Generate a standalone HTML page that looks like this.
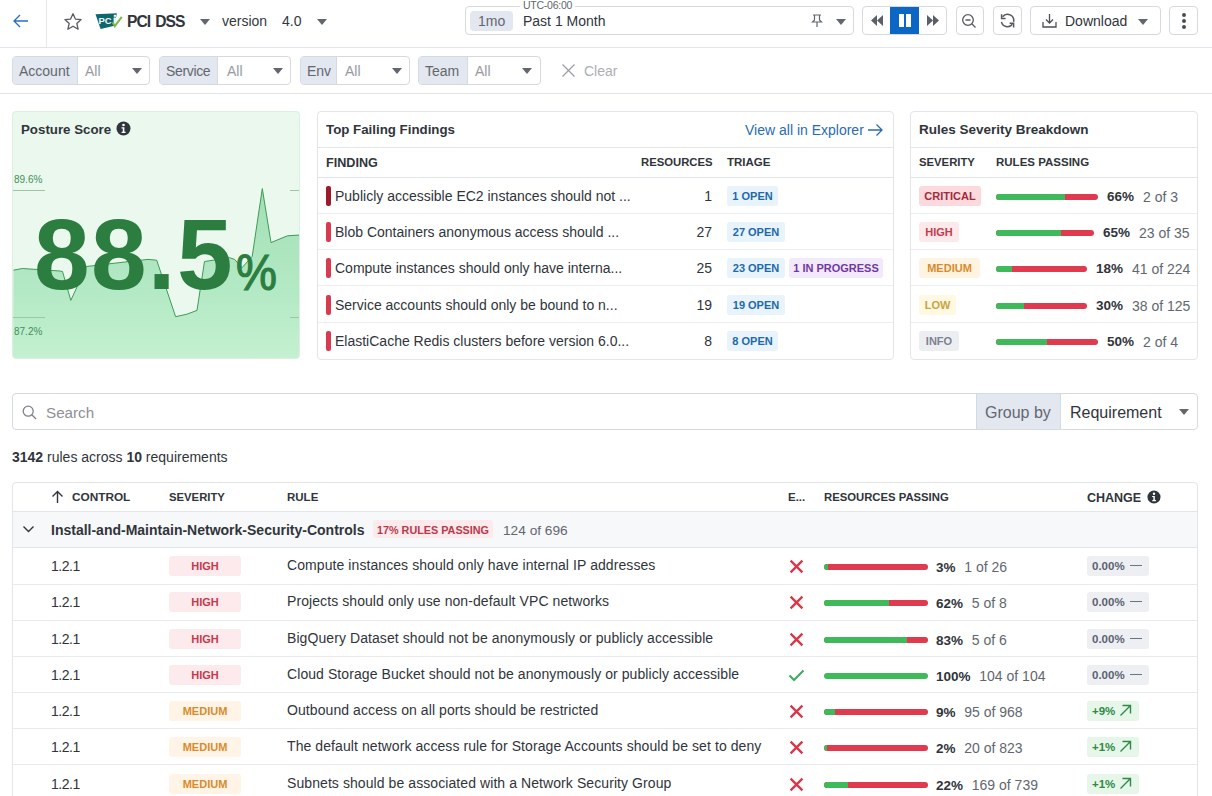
<!DOCTYPE html>
<html><head><meta charset="utf-8">
<style>
*{box-sizing:border-box;margin:0;padding:0}
html,body{width:1212px;height:796px;overflow:hidden;background:#fff}
body{font-family:"Liberation Sans",sans-serif;color:#30353b;font-size:14px;position:relative}
.abs{position:absolute}
.t{position:absolute;white-space:nowrap;line-height:1}
.hline{position:absolute;height:1px;background:#e2e5ea}
.btn{position:absolute;border:1px solid #d5d9e0;border-radius:4px;background:#fff}
.caret{position:absolute;width:0;height:0;border-left:5px solid transparent;border-right:5px solid transparent;border-top:6px solid #62676f;margin-top:1px}
.chip{position:absolute;top:56px;height:29px;border:1px solid #d5d9e0;border-radius:4px;background:#fff;overflow:hidden}
.chip .lab{position:absolute;left:0;top:0;bottom:0;background:#e3e7ef;border-right:1px solid #d5d9e0}
.card{position:absolute;top:111px;height:248px;border:1px solid #e2e5ea;border-radius:4px;background:#fff;overflow:hidden}
</style></head><body>

<!-- TOP BAR -->
<svg class="abs" style="left:12px;top:13px" width="18" height="16" viewBox="0 0 18 16"><path d="M2 8H16M8 2L2 8L8 14" fill="none" stroke="#2a6dbd" stroke-width="1.3"/></svg>
<div class="abs" style="left:46px;top:0;width:1px;height:47px;background:#e6e8ec"></div>
<svg class="abs" style="left:62.5px;top:11.5px" width="20" height="20" viewBox="0 0 20 20"><path d="M10 1.8L12.4 7.1L18.1 7.6L13.8 11.4L15.1 17.2L10 14.2L4.9 17.2L6.2 11.4L1.9 7.6L7.6 7.1Z" fill="none" stroke="#55595f" stroke-width="1.3" stroke-linejoin="round"/></svg>
<svg class="abs" style="left:90px;top:8px" width="36" height="26" viewBox="90 8 36 26"><path d="M95.5 14.2L116.8 13.2L114.5 25.8L100.6 29Z" fill="#0f666c"/><text x="98.6" y="24.4" font-family="Liberation Sans" font-weight="700" font-size="9.5" fill="#eefcfc" letter-spacing="-0.3">PC</text><rect x="113.6" y="17.5" width="2.3" height="7" fill="#eefcfc"/><rect x="113.8" y="14.8" width="2.2" height="2" fill="#eefcfc"/><path d="M112.6 22.3L114.8 26.2L121.8 16.8" fill="none" stroke="#7bb84a" stroke-width="2"/></svg>
<div class="t" style="left:127px;top:14px;font-size:15.6px;font-weight:700;color:#30353b;letter-spacing:-1px;word-spacing:2px">PCI DSS</div>
<div class="caret" style="left:200px;top:18px"></div>
<div class="t" style="left:222px;top:14px;font-size:14px;color:#33373e">version</div>
<div class="t" style="left:282px;top:14px;font-size:14px;color:#33373e">4.0</div>
<div class="caret" style="left:317px;top:18px"></div>

<!-- time picker -->
<div class="btn" style="left:465px;top:6px;width:389px;height:29px"></div>
<div class="abs" style="left:520px;top:2px;width:55px;height:8px;background:#fff"></div>
<div class="t" style="left:523px;top:0px;font-size:10.5px;color:#62676f;letter-spacing:-0.25px">UTC-06:00</div>
<div class="abs" style="left:470px;top:11px;width:43px;height:20px;background:#e3e7ef;border-radius:4px"></div>
<div class="t" style="left:478px;top:14px;font-size:14px;color:#62676f">1mo</div>
<div class="t" style="left:523px;top:14px;font-size:14px;color:#30353b">Past 1 Month</div>
<svg class="abs" style="left:810px;top:13px" width="14" height="16" viewBox="0 0 14 16"><path d="M3 2H11M4.5 2V7L2.5 9H11.5L9.5 7V2M7 9V14" fill="none" stroke="#62676f" stroke-width="1.2"/></svg>
<div class="caret" style="left:836px;top:18px"></div>

<!-- playback -->
<div class="btn" style="left:862px;top:6px;width:85px;height:29px;overflow:hidden">
  <div class="abs" style="left:27px;top:0;width:29px;height:29px;background:#0c66c4"></div>
</div>
<svg class="abs" style="left:870px;top:14px" width="14" height="13" viewBox="0 0 14 13"><path d="M7 1L1 6.5L7 12ZM13 1L7 6.5L13 12Z" fill="#5b6068"/></svg>
<div class="abs" style="left:899px;top:14px;width:5px;height:13px;background:#fff"></div>
<div class="abs" style="left:906px;top:14px;width:5px;height:13px;background:#fff"></div>
<svg class="abs" style="left:926px;top:14px" width="14" height="13" viewBox="0 0 14 13"><path d="M1 1L7 6.5L1 12ZM7 1L13 6.5L7 12Z" fill="#5b6068"/></svg>

<div class="btn" style="left:956px;top:6px;width:28px;height:29px"></div>
<svg class="abs" style="left:961px;top:13px" width="16" height="16" viewBox="0 0 16 16"><circle cx="7" cy="7" r="5.3" fill="none" stroke="#55595f" stroke-width="1.3"/><path d="M4.5 7H9.5M11 11L14.5 14.5" stroke="#55595f" stroke-width="1.3"/></svg>
<div class="btn" style="left:993px;top:6px;width:29px;height:29px"></div>
<svg class="abs" style="left:999.5px;top:13px" width="16" height="16" viewBox="0 0 16 16"><path d="M2.61 3.68A6.2 6.2 0 0 1 13.56 8.79M1.44 8.79A6.2 6.2 0 0 0 12.39 11.32" fill="none" stroke="#55595f" stroke-width="1.5"/><path d="M1.6 1.2V5.4H5.6M13.6 14.4V10.2H9.6" fill="none" stroke="#55595f" stroke-width="1.5"/></svg>
<div class="btn" style="left:1030px;top:6px;width:131px;height:29px"></div>
<svg class="abs" style="left:1042px;top:13px" width="15" height="15" viewBox="0 0 15 15"><path d="M7.5 1V10M4 6.5L7.5 10L11 6.5M1 9V14H14V9" fill="none" stroke="#4a4f57" stroke-width="1.3"/></svg>
<div class="t" style="left:1065px;top:14px;font-size:14px;color:#30353b">Download</div>
<div class="caret" style="left:1138px;top:18px"></div>
<div class="btn" style="left:1169px;top:6px;width:29px;height:29px"></div>
<div class="abs" style="left:1182px;top:13px;width:4px;height:4px;border-radius:2px;background:#4a4f57"></div>
<div class="abs" style="left:1182px;top:19px;width:4px;height:4px;border-radius:2px;background:#4a4f57"></div>
<div class="abs" style="left:1182px;top:25px;width:4px;height:4px;border-radius:2px;background:#4a4f57"></div>

<div class="hline" style="left:0;top:47px;width:1212px"></div>

<!-- FILTER BAR -->
<div class="chip" style="left:12px;width:138px"><div class="lab" style="width:65px"></div></div>
<div class="t" style="left:19px;top:64px;color:#62676e">Account</div>
<div class="t" style="left:85px;top:64px;color:#969aa0">All</div>
<div class="caret" style="left:132px;top:67px"></div>

<div class="chip" style="left:159px;width:132px"><div class="lab" style="width:58px"></div></div>
<div class="t" style="left:166px;top:64px;color:#62676e;letter-spacing:-0.35px">Service</div>
<div class="t" style="left:227px;top:64px;color:#969aa0">All</div>
<div class="caret" style="left:273px;top:67px"></div>

<div class="chip" style="left:300px;width:110px"><div class="lab" style="width:36px"></div></div>
<div class="t" style="left:307px;top:64px;color:#62676e">Env</div>
<div class="t" style="left:345px;top:64px;color:#969aa0">All</div>
<div class="caret" style="left:392px;top:67px"></div>

<div class="chip" style="left:418px;width:123px"><div class="lab" style="width:49px"></div></div>
<div class="t" style="left:425px;top:64px;color:#62676e">Team</div>
<div class="t" style="left:475px;top:64px;color:#969aa0">All</div>
<div class="caret" style="left:522px;top:67px"></div>

<svg class="abs" style="left:561px;top:63px" width="15" height="15" viewBox="0 0 15 15"><path d="M1.5 1.5L13.5 13.5M13.5 1.5L1.5 13.5" stroke="#9a9ea5" stroke-width="1.3"/></svg>
<div class="t" style="left:584px;top:64px;color:#acafb4">Clear</div>

<div class="hline" style="left:0;top:93px;width:1212px"></div>

<!-- POSTURE CARD -->
<div class="card" style="left:12px;width:288px;background:#eaf8ee;border-color:#dcefe1">
<svg class="abs" style="left:0;top:0" width="288" height="248" viewBox="12 111 288 248">
<defs><linearGradient id="g1" gradientUnits="userSpaceOnUse" x1="0" y1="187" x2="0" y2="359"><stop offset="0" stop-color="#a2dfb5"/><stop offset="0.6" stop-color="#b4e9c5"/><stop offset="1" stop-color="#c4f1d1"/></linearGradient></defs>
<path d="M12.5 269.2L21.3 267.5L59 270L61.5 270.5L69.8 299.4L85.4 265.5L118 261.7L147 258.4L155.7 259.2L174.6 315.7L185.9 313.2L196 309.4L203.5 260.5L228.6 256.7L233.6 258.4L241 266.7L251.2 255.4L261.3 187.6L270 241.6L286.4 234.8L299.5 234L299.5 359L12 359Z" fill="url(#g1)"/>
<path d="M12.5 269.2L21.3 267.5L59 270L61.5 270.5L69.8 299.4L85.4 265.5L118 261.7L147 258.4L155.7 259.2L174.6 315.7L185.9 313.2L196 309.4L203.5 260.5L228.6 256.7L233.6 258.4L241 266.7L251.2 255.4L261.3 187.6L270 241.6L286.4 234.8L299.5 234" fill="none" stroke="#3e9a57" stroke-width="1"/>
<path d="M12 189.5H44M289 189.5H300M12 316.5H44M289 316.5H300" stroke="#9cc7a7" stroke-width="1"/>
</svg>
</div>
<div class="t" style="left:21px;top:123px;font-size:13.3px;font-weight:700;color:#30353b">Posture Score</div>
<svg class="abs" style="left:116px;top:121px" width="15" height="15" viewBox="0 0 15 15"><circle cx="7.5" cy="7.5" r="7" fill="#30353b"/><circle cx="7.5" cy="4" r="1.3" fill="#fff"/><path d="M5.5 6.3H8.4V10.8H9.6V12H5.6V10.8H6.8V7.5H5.5Z" fill="#fff"/></svg>
<div class="t" style="left:14px;top:175px;font-size:10px;color:#458f5a">89.6%</div>
<div class="t" style="left:14px;top:327px;font-size:10px;color:#458f5a">87.2%</div>
<div class="t" style="left:34px;top:204px;font-size:100px;font-weight:700;color:#2b7e40;letter-spacing:1.3px">88.5</div>
<div class="t" style="left:236px;top:248px;font-size:50px;font-weight:400;color:#2b7e40;transform:scaleX(0.92);transform-origin:0 0;-webkit-text-stroke:1.2px #2b7e40">%</div>
<!-- TOP FAILING -->
<div class="card" style="left:317px;width:577px;height:249px"></div>
<div class="t" style="left:326px;top:123px;font-size:13.3px;font-weight:700;color:#30353b">Top Failing Findings</div>
<div class="t" style="left:745px;top:123px;font-size:14px;color:#2a6bb3">View all in Explorer</div>
<svg class="abs" style="left:867px;top:123px" width="17" height="14" viewBox="0 0 17 14"><path d="M1 7H15M9.5 1.5L15 7L9.5 12.5" fill="none" stroke="#2a6bb3" stroke-width="1.3"/></svg>
<div class="hline" style="left:318px;top:147px;width:575px"></div>
<div class="t" style="left:326px;top:157px;font-size:12.6px;font-weight:700;color:#30353b">FINDING</div>
<div class="t" style="left:641px;top:157px;font-size:11.3px;font-weight:700;color:#30353b">RESOURCES</div>
<div class="t" style="left:727px;top:157px;font-size:11.5px;font-weight:700;color:#30353b">TRIAGE</div>
<div class="hline" style="left:318px;top:177px;width:575px"></div>
<div class="abs" style="left:326px;width:5px;top:186px;height:20px;border-radius:2px;background:#9c1b2b"></div>
<div class="t" style="left:335px;top:189px;font-size:14px;color:#30353b">Publicly accessible EC2 instances should not ...</div>
<div class="t" style="left:613px;width:99px;text-align:right;top:189px;font-size:14px;color:#30353b">1</div>
<div class="abs" style="left:727px;top:186px;width:51px;height:20px;border-radius:3px;background:#e8f3fb;color:#1d6aab;font-size:11px;font-weight:700;line-height:21px;text-align:center;white-space:nowrap">1 OPEN</div>
<div class="hline" style="left:318px;top:213px;width:575px;background:#eceef1"></div>
<div class="abs" style="left:326px;width:5px;top:222px;height:20px;border-radius:2px;background:#d83a50"></div>
<div class="t" style="left:335px;top:225px;font-size:14px;color:#30353b">Blob Containers anonymous access should ...</div>
<div class="t" style="left:613px;width:99px;text-align:right;top:225px;font-size:14px;color:#30353b">27</div>
<div class="abs" style="left:727px;top:222px;width:58px;height:20px;border-radius:3px;background:#e8f3fb;color:#1d6aab;font-size:11px;font-weight:700;line-height:21px;text-align:center;white-space:nowrap">27 OPEN</div>
<div class="hline" style="left:318px;top:249px;width:575px;background:#eceef1"></div>
<div class="abs" style="left:326px;width:5px;top:258px;height:20px;border-radius:2px;background:#d83a50"></div>
<div class="t" style="left:335px;top:261px;font-size:14px;color:#30353b">Compute instances should only have interna...</div>
<div class="t" style="left:613px;width:99px;text-align:right;top:261px;font-size:14px;color:#30353b">25</div>
<div class="abs" style="left:727px;top:258px;width:58px;height:20px;border-radius:3px;background:#e8f3fb;color:#1d6aab;font-size:11px;font-weight:700;line-height:21px;text-align:center;white-space:nowrap">23 OPEN</div>
<div class="abs" style="left:789px;top:258px;width:94px;height:20px;border-radius:3px;background:#f2eafb;color:#71399f;font-size:11px;font-weight:700;line-height:21px;text-align:center;white-space:nowrap">1 IN PROGRESS</div>
<div class="hline" style="left:318px;top:285px;width:575px;background:#eceef1"></div>
<div class="abs" style="left:326px;width:5px;top:295px;height:20px;border-radius:2px;background:#d83a50"></div>
<div class="t" style="left:335px;top:298px;font-size:14px;color:#30353b">Service accounts should only be bound to n...</div>
<div class="t" style="left:613px;width:99px;text-align:right;top:298px;font-size:14px;color:#30353b">19</div>
<div class="abs" style="left:727px;top:295px;width:58px;height:20px;border-radius:3px;background:#e8f3fb;color:#1d6aab;font-size:11px;font-weight:700;line-height:21px;text-align:center;white-space:nowrap">19 OPEN</div>
<div class="hline" style="left:318px;top:322px;width:575px;background:#eceef1"></div>
<div class="abs" style="left:326px;width:5px;top:331px;height:20px;border-radius:2px;background:#d83a50"></div>
<div class="t" style="left:335px;top:334px;font-size:14px;color:#30353b">ElastiCache Redis clusters before version 6.0...</div>
<div class="t" style="left:613px;width:99px;text-align:right;top:334px;font-size:14px;color:#30353b">8</div>
<div class="abs" style="left:727px;top:331px;width:51px;height:20px;border-radius:3px;background:#e8f3fb;color:#1d6aab;font-size:11px;font-weight:700;line-height:21px;text-align:center;white-space:nowrap">8 OPEN</div>
<!-- SEVERITY BREAKDOWN -->
<div class="card" style="left:910px;width:288px;height:249px"></div>
<div class="t" style="left:919px;top:123px;font-size:13.5px;font-weight:700;color:#30353b">Rules Severity Breakdown</div>
<div class="hline" style="left:911px;top:147px;width:286px"></div>
<div class="t" style="left:919px;top:157px;font-size:11.3px;font-weight:700;color:#30353b">SEVERITY</div>
<div class="t" style="left:996px;top:157px;font-size:11.5px;font-weight:700;color:#30353b">RULES PASSING</div>
<div class="hline" style="left:911px;top:177px;width:286px"></div>
<div class="abs" style="left:919px;top:186px;width:62px;height:20px;border-radius:3px;background:#fbd9dd;color:#a32a3b;font-size:11px;font-weight:700;line-height:20px;text-align:center">CRITICAL</div>
<div class="abs" style="left:996px;top:194px;width:102px;height:6px;border-radius:3px;background:#e03a4e;overflow:hidden"><div style="width:69px;height:6px;background:#3fba5b"></div></div>
<div class="t" style="left:1107px;top:190px;font-size:13.5px;font-weight:700;color:#30353b">66%</div>
<div class="t" style="left:1143px;top:190px;font-size:14px;color:#62676f">2 of 3</div>
<div class="hline" style="left:911px;top:213px;width:286px;background:#eceef1"></div>
<div class="abs" style="left:919px;top:222px;width:40px;height:20px;border-radius:3px;background:#fde8ea;color:#c73a4e;font-size:11px;font-weight:700;line-height:20px;text-align:center">HIGH</div>
<div class="abs" style="left:996px;top:230px;width:98px;height:6px;border-radius:3px;background:#e03a4e;overflow:hidden"><div style="width:65px;height:6px;background:#3fba5b"></div></div>
<div class="t" style="left:1103px;top:226px;font-size:13.5px;font-weight:700;color:#30353b">65%</div>
<div class="t" style="left:1139px;top:226px;font-size:14px;color:#62676f">23 of 35</div>
<div class="hline" style="left:911px;top:249px;width:286px;background:#eceef1"></div>
<div class="abs" style="left:919px;top:258px;width:61px;height:20px;border-radius:3px;background:#fff3e2;color:#d98b2b;font-size:11px;font-weight:700;line-height:20px;text-align:center">MEDIUM</div>
<div class="abs" style="left:996px;top:266px;width:91px;height:6px;border-radius:3px;background:#e03a4e;overflow:hidden"><div style="width:16px;height:6px;background:#3fba5b"></div></div>
<div class="t" style="left:1096px;top:262px;font-size:13.5px;font-weight:700;color:#30353b">18%</div>
<div class="t" style="left:1132px;top:262px;font-size:14px;color:#62676f">41 of 224</div>
<div class="hline" style="left:911px;top:285px;width:286px;background:#eceef1"></div>
<div class="abs" style="left:919px;top:295px;width:37px;height:20px;border-radius:3px;background:#fff8e2;color:#c9a341;font-size:11px;font-weight:700;line-height:20px;text-align:center">LOW</div>
<div class="abs" style="left:996px;top:303px;width:91px;height:6px;border-radius:3px;background:#e03a4e;overflow:hidden"><div style="width:28px;height:6px;background:#3fba5b"></div></div>
<div class="t" style="left:1096px;top:299px;font-size:13.5px;font-weight:700;color:#30353b">30%</div>
<div class="t" style="left:1132px;top:299px;font-size:14px;color:#62676f">38 of 125</div>
<div class="hline" style="left:911px;top:322px;width:286px;background:#eceef1"></div>
<div class="abs" style="left:919px;top:331px;width:40px;height:20px;border-radius:3px;background:#eceef2;color:#7d8290;font-size:11px;font-weight:700;line-height:20px;text-align:center">INFO</div>
<div class="abs" style="left:996px;top:339px;width:102px;height:6px;border-radius:3px;background:#e03a4e;overflow:hidden"><div style="width:51px;height:6px;background:#3fba5b"></div></div>
<div class="t" style="left:1107px;top:335px;font-size:13.5px;font-weight:700;color:#30353b">50%</div>
<div class="t" style="left:1143px;top:335px;font-size:14px;color:#62676f">2 of 4</div>
<!-- SEARCH -->
<div class="btn" style="left:12px;top:393px;width:1186px;height:37px;overflow:hidden"><div class="abs" style="left:963px;top:0;width:85px;height:37px;background:#e3e7ef;border-left:1px solid #d5d9e0;border-right:1px solid #d5d9e0"></div></div>
<svg class="abs" style="left:22px;top:405px" width="15" height="15" viewBox="0 0 15 15"><circle cx="6.2" cy="6.2" r="5" fill="none" stroke="#7d8289" stroke-width="1.3"/><path d="M9.8 9.8L14 14" stroke="#7d8289" stroke-width="1.3"/></svg>
<div class="t" style="left:46px;top:405px;font-size:15.2px;color:#8c9097">Search</div>
<div class="t" style="left:985px;top:405px;font-size:16px;color:#62676f">Group by</div>
<div class="t" style="left:1070px;top:405px;font-size:16px;color:#30353b">Requirement</div>
<div class="caret" style="left:1179px;top:408px;border-left-width:5px;border-right-width:5px;border-top-width:6px"></div>
<div class="t" style="left:12px;top:450px;font-size:14px;color:#30353b"><b>3142</b> rules across <b>10</b> requirements</div>
<!-- TABLE -->
<div class="abs" style="left:12px;top:482px;width:1186px;height:330px;border:1px solid #e2e5ea;border-radius:4px;background:#fff"></div>
<div class="abs" style="left:13px;top:512px;width:1184px;height:36px;background:#f7f8f9"></div>
<div class="hline" style="left:13px;top:511px;width:1184px"></div>
<div class="hline" style="left:13px;top:547px;width:1184px"></div>
<svg class="abs" style="left:51px;top:490px" width="13" height="14" viewBox="0 0 13 14"><path d="M6.5 13V1.5M1.5 6.5L6.5 1.5L11.5 6.5" fill="none" stroke="#30353b" stroke-width="1.4"/></svg>
<div class="t" style="left:72px;top:492px;font-size:11.8px;font-weight:700;color:#30353b">CONTROL</div>
<div class="t" style="left:169px;top:492px;font-size:11.3px;font-weight:700;color:#30353b">SEVERITY</div>
<div class="t" style="left:287px;top:492px;font-size:11.5px;font-weight:700;color:#30353b">RULE</div>
<div class="t" style="left:788px;top:492px;font-size:11.5px;font-weight:700;color:#30353b">E...</div>
<div class="t" style="left:824px;top:492px;font-size:11.3px;font-weight:700;color:#30353b">RESOURCES PASSING</div>
<div class="t" style="left:1087px;top:492px;font-size:12.5px;font-weight:700;color:#30353b">CHANGE</div>
<svg class="abs" style="left:1147px;top:490px" width="14" height="14" viewBox="0 0 15 15"><circle cx="7.5" cy="7.5" r="7" fill="#30353b"/><circle cx="7.5" cy="4" r="1.3" fill="#fff"/><path d="M5.5 6.3H8.4V10.8H9.6V12H5.6V10.8H6.8V7.5H5.5Z" fill="#fff"/></svg>
<svg class="abs" style="left:22px;top:524px" width="13" height="10" viewBox="0 0 13 10"><path d="M1.5 2.5L6.5 7.5L11.5 2.5" fill="none" stroke="#30353b" stroke-width="1.4"/></svg>
<div class="t" style="left:51px;top:523px;font-size:14px;font-weight:700;color:#30353b">Install-and-Maintain-Network-Security-Controls</div>
<div class="abs" style="left:373px;top:520px;width:120px;height:18px;border-radius:3px;background:#fdeaec;color:#b8394b;font-size:10.8px;font-weight:700;line-height:20px;text-align:center;white-space:nowrap">17% RULES PASSING</div>
<div class="t" style="left:503px;top:524px;font-size:13.7px;color:#62676f">124 of 696</div>
<div class="t" style="left:51px;top:559px;font-size:14px;color:#30353b;letter-spacing:-0.45px">1.2.1</div>
<div class="abs" style="left:169px;top:556px;width:72px;height:20px;border-radius:3px;background:#fdeaed;color:#c8374b;font-size:11px;font-weight:700;line-height:20px;text-align:center">HIGH</div>
<div class="t" style="left:287px;top:558px;font-size:14px;color:#30353b;letter-spacing:0.08px">Compute instances should only have internal IP addresses</div>
<svg class="abs" style="left:788.5px;top:558.5px" width="15" height="15" viewBox="0 0 15 15"><path d="M1.6 1.6L13.4 13.4M13.4 1.6L1.6 13.4" stroke="#d8374a" stroke-width="2.3"/></svg>
<div class="abs" style="left:824px;top:564px;width:104px;height:6px;border-radius:3px;background:#e03a4e;overflow:hidden"><div style="width:4.4px;height:6px;background:#3fba5b"></div></div>
<div class="t" style="left:936px;top:560px;font-size:13.5px;font-weight:700;color:#30353b">3% <span style="font-weight:400;color:#62676f;font-size:14px;margin-left:5px">1 of 26</span></div>
<div class="abs" style="left:1087px;top:556px;width:62px;height:20px;border-radius:3px;background:#edeff3"></div>
<div class="t" style="left:1092px;top:561px;font-size:11.5px;font-weight:700;color:#5b6270">0.00%</div>
<div class="abs" style="left:1130px;top:565px;width:12px;height:1px;background:#6b7280"></div>
<div class="hline" style="left:13px;top:584px;width:1184px;background:#e8eaee"></div>
<div class="t" style="left:51px;top:595px;font-size:14px;color:#30353b;letter-spacing:-0.45px">1.2.1</div>
<div class="abs" style="left:169px;top:592px;width:72px;height:20px;border-radius:3px;background:#fdeaed;color:#c8374b;font-size:11px;font-weight:700;line-height:20px;text-align:center">HIGH</div>
<div class="t" style="left:287px;top:594px;font-size:14px;color:#30353b;letter-spacing:0.08px">Projects should only use non-default VPC networks</div>
<svg class="abs" style="left:788.5px;top:594.5px" width="15" height="15" viewBox="0 0 15 15"><path d="M1.6 1.6L13.4 13.4M13.4 1.6L1.6 13.4" stroke="#d8374a" stroke-width="2.3"/></svg>
<div class="abs" style="left:824px;top:600px;width:104px;height:6px;border-radius:3px;background:#e03a4e;overflow:hidden"><div style="width:64.7px;height:6px;background:#3fba5b"></div></div>
<div class="t" style="left:936px;top:596px;font-size:13.5px;font-weight:700;color:#30353b">62% <span style="font-weight:400;color:#62676f;font-size:14px;margin-left:5px">5 of 8</span></div>
<div class="abs" style="left:1087px;top:592px;width:62px;height:20px;border-radius:3px;background:#edeff3"></div>
<div class="t" style="left:1092px;top:597px;font-size:11.5px;font-weight:700;color:#5b6270">0.00%</div>
<div class="abs" style="left:1130px;top:601px;width:12px;height:1px;background:#6b7280"></div>
<div class="hline" style="left:13px;top:620px;width:1184px;background:#e8eaee"></div>
<div class="t" style="left:51px;top:632px;font-size:14px;color:#30353b;letter-spacing:-0.45px">1.2.1</div>
<div class="abs" style="left:169px;top:629px;width:72px;height:20px;border-radius:3px;background:#fdeaed;color:#c8374b;font-size:11px;font-weight:700;line-height:20px;text-align:center">HIGH</div>
<div class="t" style="left:287px;top:631px;font-size:14px;color:#30353b;letter-spacing:0.08px">BigQuery Dataset should not be anonymously or publicly accessible</div>
<svg class="abs" style="left:788.5px;top:631.5px" width="15" height="15" viewBox="0 0 15 15"><path d="M1.6 1.6L13.4 13.4M13.4 1.6L1.6 13.4" stroke="#d8374a" stroke-width="2.3"/></svg>
<div class="abs" style="left:824px;top:637px;width:104px;height:6px;border-radius:3px;background:#e03a4e;overflow:hidden"><div style="width:83.0px;height:6px;background:#3fba5b"></div></div>
<div class="t" style="left:936px;top:633px;font-size:13.5px;font-weight:700;color:#30353b">83% <span style="font-weight:400;color:#62676f;font-size:14px;margin-left:5px">5 of 6</span></div>
<div class="abs" style="left:1087px;top:629px;width:62px;height:20px;border-radius:3px;background:#edeff3"></div>
<div class="t" style="left:1092px;top:634px;font-size:11.5px;font-weight:700;color:#5b6270">0.00%</div>
<div class="abs" style="left:1130px;top:638px;width:12px;height:1px;background:#6b7280"></div>
<div class="hline" style="left:13px;top:656px;width:1184px;background:#e8eaee"></div>
<div class="t" style="left:51px;top:668px;font-size:14px;color:#30353b;letter-spacing:-0.45px">1.2.1</div>
<div class="abs" style="left:169px;top:665px;width:72px;height:20px;border-radius:3px;background:#fdeaed;color:#c8374b;font-size:11px;font-weight:700;line-height:20px;text-align:center">HIGH</div>
<div class="t" style="left:287px;top:667px;font-size:14px;color:#30353b;letter-spacing:0.08px">Cloud Storage Bucket should not be anonymously or publicly accessible</div>
<svg class="abs" style="left:788px;top:669px" width="17" height="13" viewBox="0 0 17 13"><path d="M1.5 6.5L6 11L15.5 1.5" fill="none" stroke="#3dab5b" stroke-width="2"/></svg>
<div class="abs" style="left:824px;top:673px;width:104px;height:6px;border-radius:3px;background:#e03a4e;overflow:hidden"><div style="width:104.0px;height:6px;background:#3fba5b"></div></div>
<div class="t" style="left:936px;top:669px;font-size:13.5px;font-weight:700;color:#30353b">100% <span style="font-weight:400;color:#62676f;font-size:14px;margin-left:5px">104 of 104</span></div>
<div class="abs" style="left:1087px;top:665px;width:62px;height:20px;border-radius:3px;background:#edeff3"></div>
<div class="t" style="left:1092px;top:670px;font-size:11.5px;font-weight:700;color:#5b6270">0.00%</div>
<div class="abs" style="left:1130px;top:674px;width:12px;height:1px;background:#6b7280"></div>
<div class="hline" style="left:13px;top:692px;width:1184px;background:#e8eaee"></div>
<div class="t" style="left:51px;top:704px;font-size:14px;color:#30353b;letter-spacing:-0.45px">1.2.1</div>
<div class="abs" style="left:169px;top:701px;width:72px;height:20px;border-radius:3px;background:#fff4e6;color:#d98b2b;font-size:11px;font-weight:700;line-height:20px;text-align:center">MEDIUM</div>
<div class="t" style="left:287px;top:703px;font-size:14px;color:#30353b;letter-spacing:0.08px">Outbound access on all ports should be restricted</div>
<svg class="abs" style="left:788.5px;top:703.5px" width="15" height="15" viewBox="0 0 15 15"><path d="M1.6 1.6L13.4 13.4M13.4 1.6L1.6 13.4" stroke="#d8374a" stroke-width="2.3"/></svg>
<div class="abs" style="left:824px;top:709px;width:104px;height:6px;border-radius:3px;background:#e03a4e;overflow:hidden"><div style="width:11.0px;height:6px;background:#3fba5b"></div></div>
<div class="t" style="left:936px;top:705px;font-size:13.5px;font-weight:700;color:#30353b">9% <span style="font-weight:400;color:#62676f;font-size:14px;margin-left:5px">95 of 968</span></div>
<div class="abs" style="left:1087px;top:701px;width:52px;height:20px;border-radius:3px;background:#e6f6e9"></div>
<div class="t" style="left:1092px;top:706px;font-size:11.5px;font-weight:700;color:#2e8a46">+9%</div>
<svg class="abs" style="left:1119px;top:704px" width="13" height="13" viewBox="0 0 13 13"><path d="M1.5 11.5L11.5 1.5M3.5 1.5H11.5V9.5" fill="none" stroke="#2e8a46" stroke-width="1.4"/></svg>
<div class="hline" style="left:13px;top:728px;width:1184px;background:#e8eaee"></div>
<div class="t" style="left:51px;top:740px;font-size:14px;color:#30353b;letter-spacing:-0.45px">1.2.1</div>
<div class="abs" style="left:169px;top:737px;width:72px;height:20px;border-radius:3px;background:#fff4e6;color:#d98b2b;font-size:11px;font-weight:700;line-height:20px;text-align:center">MEDIUM</div>
<div class="t" style="left:287px;top:739px;font-size:14px;color:#30353b;letter-spacing:0.08px">The default network access rule for Storage Accounts should be set to deny</div>
<svg class="abs" style="left:788.5px;top:739.5px" width="15" height="15" viewBox="0 0 15 15"><path d="M1.6 1.6L13.4 13.4M13.4 1.6L1.6 13.4" stroke="#d8374a" stroke-width="2.3"/></svg>
<div class="abs" style="left:824px;top:745px;width:104px;height:6px;border-radius:3px;background:#e03a4e;overflow:hidden"><div style="width:2.5px;height:6px;background:#3fba5b"></div></div>
<div class="t" style="left:936px;top:741px;font-size:13.5px;font-weight:700;color:#30353b">2% <span style="font-weight:400;color:#62676f;font-size:14px;margin-left:5px">20 of 823</span></div>
<div class="abs" style="left:1087px;top:737px;width:52px;height:20px;border-radius:3px;background:#e6f6e9"></div>
<div class="t" style="left:1092px;top:742px;font-size:11.5px;font-weight:700;color:#2e8a46">+1%</div>
<svg class="abs" style="left:1119px;top:740px" width="13" height="13" viewBox="0 0 13 13"><path d="M1.5 11.5L11.5 1.5M3.5 1.5H11.5V9.5" fill="none" stroke="#2e8a46" stroke-width="1.4"/></svg>
<div class="hline" style="left:13px;top:764px;width:1184px;background:#e8eaee"></div>
<div class="t" style="left:51px;top:777px;font-size:14px;color:#30353b;letter-spacing:-0.45px">1.2.1</div>
<div class="abs" style="left:169px;top:774px;width:72px;height:20px;border-radius:3px;background:#fff4e6;color:#d98b2b;font-size:11px;font-weight:700;line-height:20px;text-align:center">MEDIUM</div>
<div class="t" style="left:287px;top:776px;font-size:14px;color:#30353b;letter-spacing:0.08px">Subnets should be associated with a Network Security Group</div>
<svg class="abs" style="left:788.5px;top:776.5px" width="15" height="15" viewBox="0 0 15 15"><path d="M1.6 1.6L13.4 13.4M13.4 1.6L1.6 13.4" stroke="#d8374a" stroke-width="2.3"/></svg>
<div class="abs" style="left:824px;top:782px;width:104px;height:6px;border-radius:3px;background:#e03a4e;overflow:hidden"><div style="width:24.0px;height:6px;background:#3fba5b"></div></div>
<div class="t" style="left:936px;top:778px;font-size:13.5px;font-weight:700;color:#30353b">22% <span style="font-weight:400;color:#62676f;font-size:14px;margin-left:5px">169 of 739</span></div>
<div class="abs" style="left:1087px;top:774px;width:52px;height:20px;border-radius:3px;background:#e6f6e9"></div>
<div class="t" style="left:1092px;top:779px;font-size:11.5px;font-weight:700;color:#2e8a46">+1%</div>
<svg class="abs" style="left:1119px;top:777px" width="13" height="13" viewBox="0 0 13 13"><path d="M1.5 11.5L11.5 1.5M3.5 1.5H11.5V9.5" fill="none" stroke="#2e8a46" stroke-width="1.4"/></svg>
<div class="hline" style="left:13px;top:800px;width:1184px;background:#e8eaee"></div>
</body></html>
